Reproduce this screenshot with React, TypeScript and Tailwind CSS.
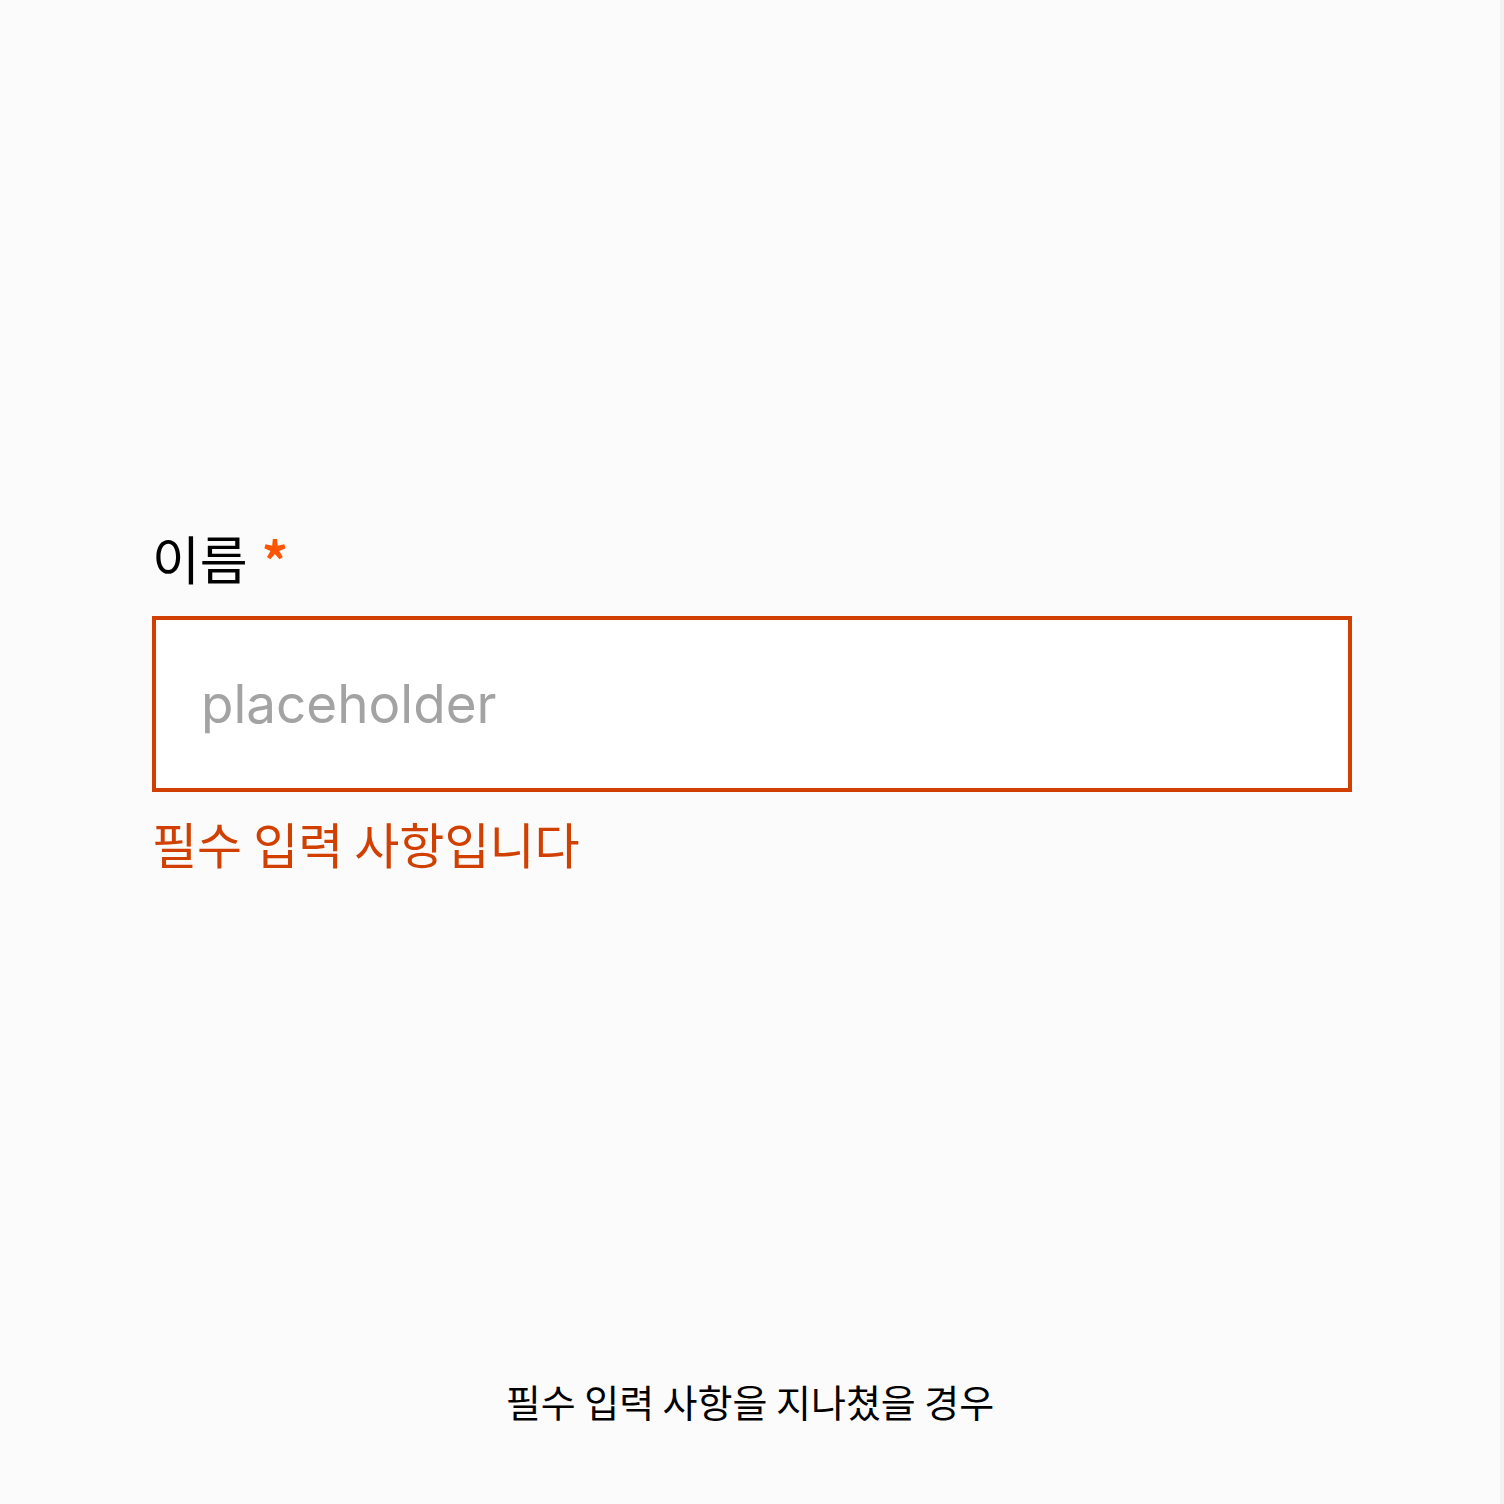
import React from "react";

export default function App() {
  const kr = { fontFamily: '"Noto Sans CJK KR", "Noto Sans", sans-serif' };
  return (
    <div className="flex w-[1504px] h-[1504px] bg-[#fbfbfb]">
      <div className="flex-1 flex flex-col">
        <div className="pl-[152px] pt-[522px] w-[1352px]" style={kr}>
          <div className="flex items-start h-[72px]">
            <span className="text-[52px] leading-[72px] text-black">이름</span>
            <span className="ml-[14px] text-[52px] leading-[74px] text-[#ff5500] font-bold">*</span>
          </div>
          <div className="mt-[22px] h-[176px] w-[1200px] border-[4px] border-[#d14000] bg-white flex items-center pl-[45px]">
            <span
              className="text-[53px] text-[#a3a3a3] pt-[2px]"
              style={{ fontFamily: 'Inter, "Liberation Sans", sans-serif' }}
            >
              placeholder
            </span>
          </div>
          <div className="mt-[18px] text-[49px] leading-[66px] text-[#d14000]">필수 입력 사항입니다</div>
        </div>
        <div className="flex-1" />
        <div className="text-center text-[38px] leading-[50px] text-black pb-[78px]" style={kr}>
          필수 입력 사항을 지나쳤을 경우
        </div>
      </div>
      <div className="w-[4px] bg-[#f2f2f2]" />
    </div>
  );
}
